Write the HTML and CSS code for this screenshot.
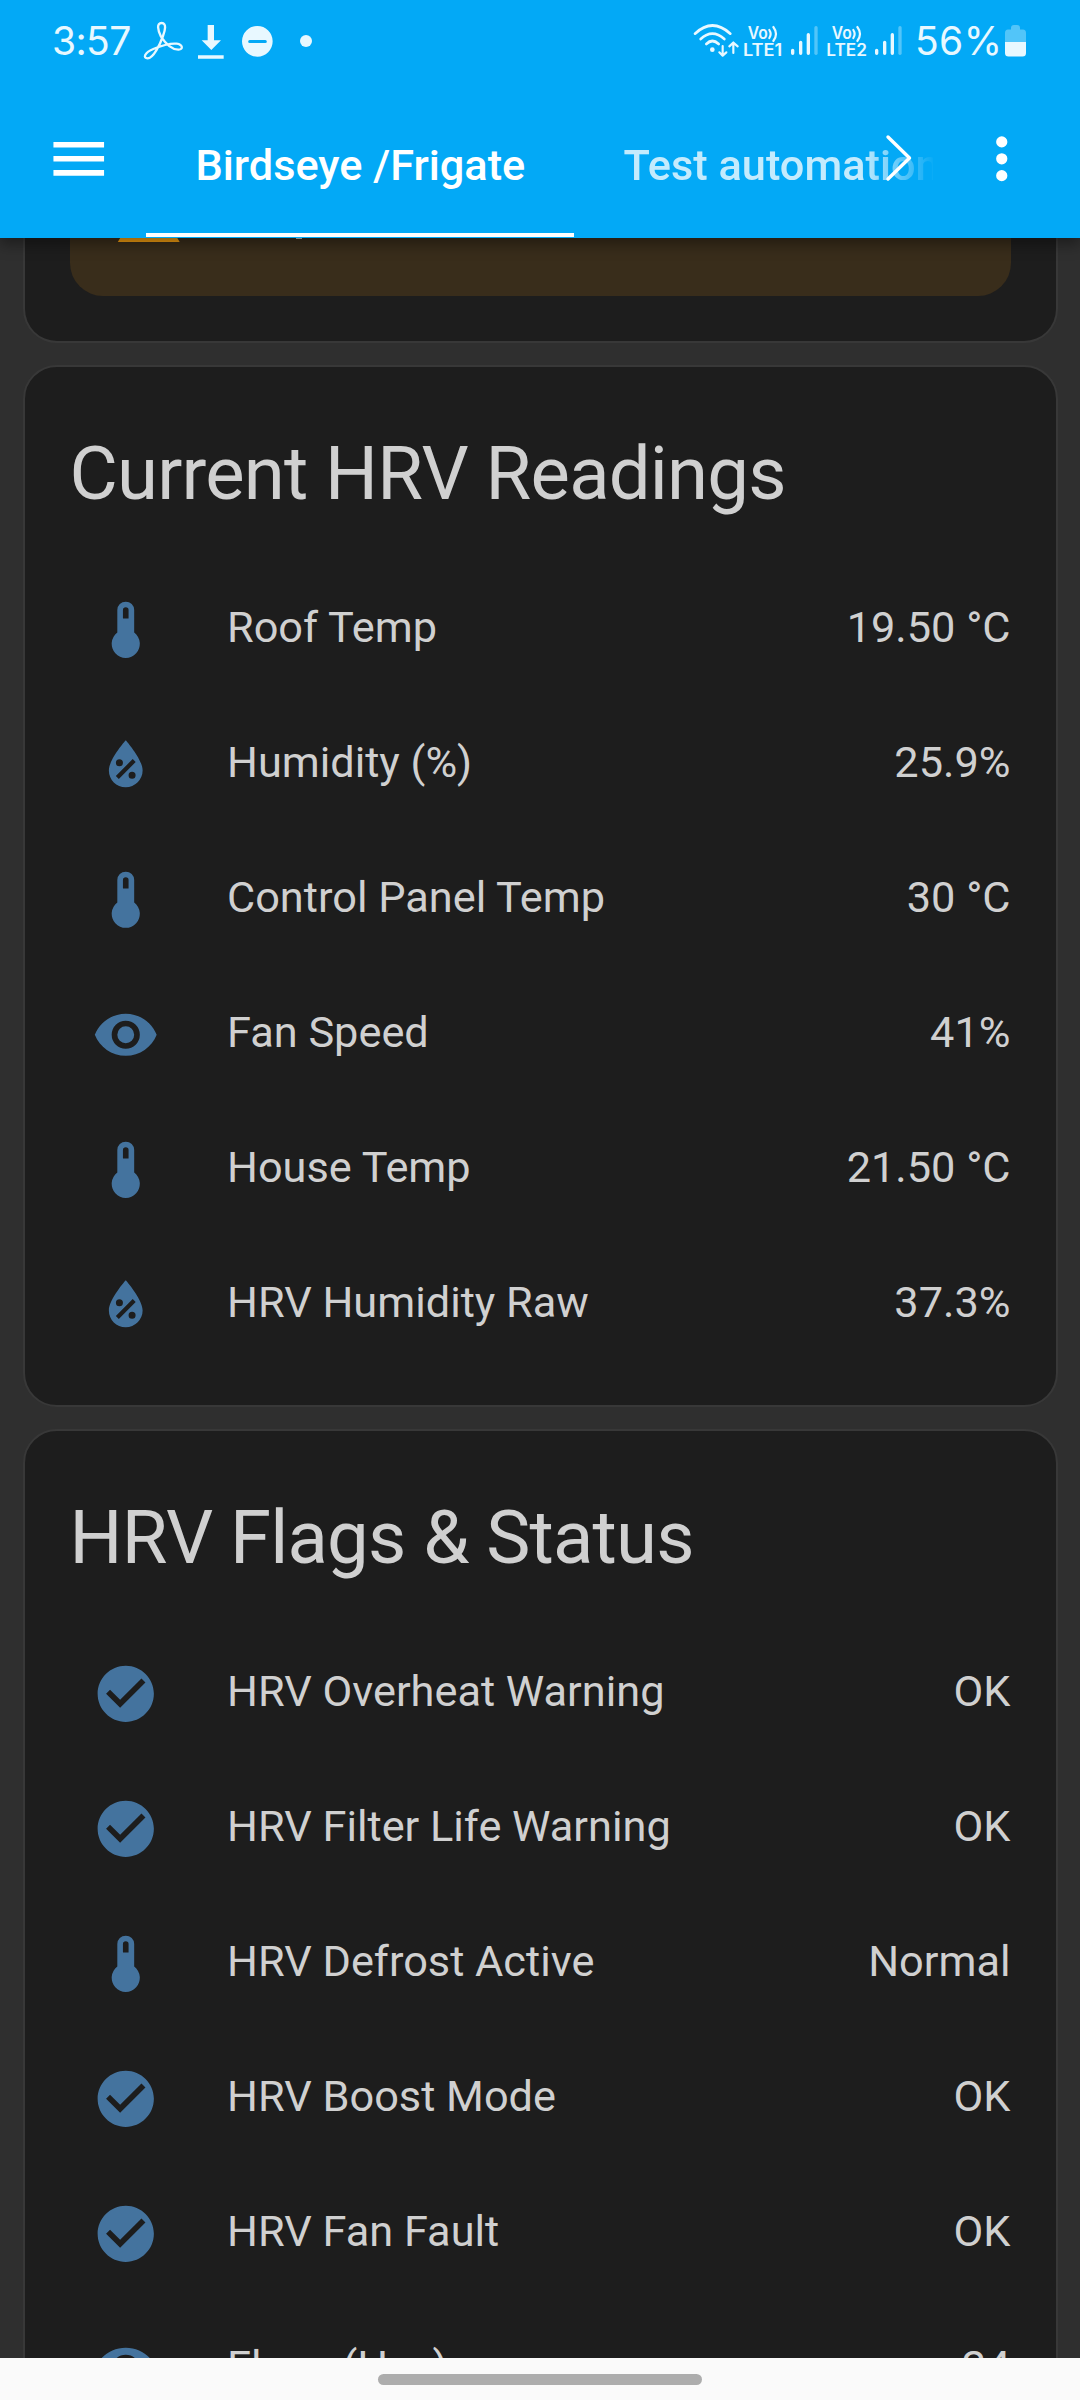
FILE: index.html
```html
<!DOCTYPE html>
<html lang="en">
<head>
<meta charset="utf-8">
<title>Birdseye /Frigate</title>
<link rel="stylesheet" href="styles.css">
</head>
<body>
<svg class="defs" aria-hidden="true">
  <symbol id="thermometer" viewBox="0 0 24 24"><path d="M15 13V5A3 3 0 0 0 9 5V13A5 5 0 1 0 15 13M12 4A1 1 0 0 1 13 5V8H11V5A1 1 0 0 1 12 4Z"/></symbol>
  <symbol id="humidity" viewBox="0 0 24 24"><path d="M12 3.25S6 10 6 14C6 17.32 8.69 20 12 20A6 6 0 0 0 18 14C18 10 12 3.25 12 3.25M14.47 9.97L15.53 11.03L9.53 17.03L8.47 15.97M9.75 10A1.25 1.25 0 0 1 11 11.25A1.25 1.25 0 0 1 9.75 12.5A1.25 1.25 0 0 1 8.5 11.25A1.25 1.25 0 0 1 9.75 10M14.25 14.5A1.25 1.25 0 0 1 15.5 15.75A1.25 1.25 0 0 1 14.25 17A1.25 1.25 0 0 1 13 15.75A1.25 1.25 0 0 1 14.25 14.5Z"/></symbol>
  <symbol id="eye" viewBox="0 0 24 24"><path d="M12 9A3 3 0 0 0 9 12A3 3 0 0 0 12 15A3 3 0 0 0 15 12A3 3 0 0 0 12 9M12 17A5 5 0 0 1 7 12A5 5 0 0 1 12 7A5 5 0 0 1 17 12A5 5 0 0 1 12 17M12 4.5C7 4.5 2.73 7.61 1 12C2.73 16.39 7 19.5 12 19.5C17 19.5 21.27 16.39 23 12C21.27 7.61 17 4.5 12 4.5Z"/></symbol>
  <symbol id="check" viewBox="0 0 24 24"><path d="M12 2C6.5 2 2 6.5 2 12S6.5 22 12 22 22 17.5 22 12 17.5 2 12 2M10 17L5 12L6.41 10.59L10 14.17L17.59 6.58L19 8L10 17Z"/></symbol>
</svg>

<header class="header">
  <div class="status">
    <span class="clock">3:57</span>
    <svg class="notifications" viewBox="0 0 200 60">
      <g transform="scale(.33333)">
        <path class="line" stroke-width="7" d="M93 80C83 60 79 39 95 39C111 39 105 62 99 78C90 104 70 145 53 145C38 145 43 128 70 117C94 107 120 99 140 101C159 104 160 118 146 119C126 120 107 101 93 80Z"/>
        <path d="M233 45h19v46h21l-29 29-29-29h18zM204 136h77v10h-77z"/>
        <path fill-rule="evenodd" d="M382 48a46 46 0 1 1 0 92a46 46 0 1 1 0-92M359 90a4 4 0 0 0 0 9h47a4 4 0 0 0 0-9z"/>
        <circle cx="528" cy="93" r="18"/>
      </g>
    </svg>
    <svg class="signals" viewBox="0 0 220 60">
      <g transform="scale(.33333)">
        <g class="line" stroke-width="8">
          <path d="M15 71Q67 22 121 71M32 87Q67 55 103 87M49 102Q67 84 86 102"/>
          <path stroke-width="6.5" d="M98 108V136M88 127L98 137L109 127M130 129V98M118 109L130 98L143 109"/>
        </g>
        <circle cx="67" cy="119" r="7"/>
        <g id="sim">
          <text class="volte" x="173" y="86" textLength="60" lengthAdjust="spacingAndGlyphs">Vo</text>
          <path class="line" stroke-width="6.5" d="M238 60Q246 72 238 84M250 51Q266 72 250 93"/>
          <path class="line" stroke-width="10" d="M308 121V130M332 97V130M355 74V130"/>
          <path class="line faint" stroke-width="10" d="M378 53V130"/>
        </g>
        <text class="volte" x="159" y="138" textLength="118" lengthAdjust="spacingAndGlyphs">LTE1</text>
        <use href="#sim" x="252"/>
        <text class="volte" x="409" y="138" textLength="122" lengthAdjust="spacingAndGlyphs">LTE2</text>
      </g>
    </svg>
    <span class="percent">56%</span>
    <svg class="battery" viewBox="0 0 21 32">
      <path opacity=".35" d="M6 3Q6 0 9 0H12Q15 0 15 3V4.500H18Q21 4.500 21 8V17H0V8Q0 4.500 3 4.500H6z"/>
      <path d="M0 17H21V28Q21 31.500 17.500 31.500H3.500Q0 31.500 0 28z"/>
    </svg>
  </div>
  <div class="toolbar">
    <svg class="menu" viewBox="0 0 24 24"><path d="M3 6H21V8H3V6M3 11H21V13H3V11M3 16H21V18H3V16Z"/></svg>
    <nav class="tabs">
      <a class="tab active">Birdseye /Frigate</a>
      <a class="tab next">Test automation</a>
      <svg class="chevron" viewBox="0 0 30 50"><path d="M4 4L25.500 25L4 46"/></svg>
    </nav>
    <svg class="more" viewBox="0 0 24 24"><path d="M12 16A2 2 0 0 1 14 18A2 2 0 0 1 12 20A2 2 0 0 1 10 18A2 2 0 0 1 12 16M12 10A2 2 0 0 1 14 12A2 2 0 0 1 12 14A2 2 0 0 1 10 12A2 2 0 0 1 12 10M12 4A2 2 0 0 1 14 6A2 2 0 0 1 12 8A2 2 0 0 1 10 6A2 2 0 0 1 12 4Z"/></svg>
  </div>
</header>

<main class="view">
  <section class="card card-alert">
    <div class="alert">
      <svg class="alert-icon" viewBox="0 0 24 24"><path d="M13 14H11V9H13M13 18H11V15H13M1 21H23L12 2L1 21Z"/></svg>
      <span class="alert-tail"></span>
    </div>
  </section>

  <section class="card">
    <h1 class="title">Current HRV Readings</h1>
    <div class="rows">
      <div class="row"><svg class="icon"><use href="#thermometer"/></svg><span class="name">Roof Temp</span><span class="value">19.50 °C</span></div>
      <div class="row"><svg class="icon"><use href="#humidity"/></svg><span class="name">Humidity (%)</span><span class="value">25.9%</span></div>
      <div class="row"><svg class="icon"><use href="#thermometer"/></svg><span class="name">Control Panel Temp</span><span class="value">30 °C</span></div>
      <div class="row"><svg class="icon"><use href="#eye"/></svg><span class="name">Fan Speed</span><span class="value">41%</span></div>
      <div class="row"><svg class="icon"><use href="#thermometer"/></svg><span class="name">House Temp</span><span class="value">21.50 °C</span></div>
      <div class="row"><svg class="icon"><use href="#humidity"/></svg><span class="name">HRV Humidity Raw</span><span class="value">37.3%</span></div>
    </div>
  </section>

  <section class="card">
    <h1 class="title">HRV Flags &amp; Status</h1>
    <div class="rows">
      <div class="row"><svg class="icon"><use href="#check"/></svg><span class="name">HRV Overheat Warning</span><span class="value">OK</span></div>
      <div class="row"><svg class="icon"><use href="#check"/></svg><span class="name">HRV Filter Life Warning</span><span class="value">OK</span></div>
      <div class="row"><svg class="icon"><use href="#thermometer"/></svg><span class="name">HRV Defrost Active</span><span class="value">Normal</span></div>
      <div class="row"><svg class="icon"><use href="#check"/></svg><span class="name">HRV Boost Mode</span><span class="value">OK</span></div>
      <div class="row"><svg class="icon"><use href="#check"/></svg><span class="name">HRV Fan Fault</span><span class="value">OK</span></div>
      <div class="row"><svg class="icon"><use href="#eye"/></svg><span class="name">Flags (Hex)</span><span class="value">24</span></div>
    </div>
  </section>
</main>

<footer class="navbar"><div class="handle"></div></footer>
</body>
</html>
```
FILE: styles.css
```css
* { box-sizing: border-box; }

body {
  margin: 0;
  width: 1080px;
  height: 2400px;
  overflow: hidden;
  display: flex;
  flex-direction: column;
  background: #2f2f2f;
  color: #d0d0d0;
  font-family: Roboto, "Liberation Sans", sans-serif;
}

.defs { display: none; }

.header {
  flex: none;
  height: 238px;
  position: relative;
  z-index: 1;
  background: #03a9f6;
  box-shadow: 0 6px 14px rgba(0, 0, 0, .4);
}

.status {
  height: 80px;
  display: flex;
  align-items: flex-start;
  padding: 10px 53px 0 52px;
  color: #e8f8ff;
  fill: #e8f8ff;
}

.clock, .percent {
  font-family: Inter, sans-serif;
  font-weight: 400;
  font-size: 39px;
  line-height: 62px;
  height: 60px;
  white-space: nowrap;
}

.clock { width: 78px; letter-spacing: -.6px; }
.percent { width: 90px; letter-spacing: .4px; }
.notifications { flex: none; width: 200px; height: 60px; }
.signals { flex: none; width: 220px; height: 60px; margin-left: 360px; margin-right: 5px; }
.battery { flex: none; width: 21px; height: 32px; margin-top: 15px; }

.line {
  fill: none;
  stroke: #e8f8ff;
  stroke-linecap: round;
  stroke-linejoin: round;
}
.faint { opacity: .35; }
.volte { font: 600 50px Inter, sans-serif; }

.toolbar {
  height: 158px;
  display: flex;
  align-items: center;
}

.menu {
  width: 67.5px;
  height: 67.5px;
  margin: 0 33.5px 0 45px;
  fill: #fff;
}

.tabs {
  width: 787px;
  height: 158px;
  display: flex;
  position: relative;
  overflow: hidden;
}

.tab {
  flex: none;
  height: 157px;
  padding: 14px 48px 0 49.5px;
  font-size: 43.3px;
  font-weight: 500;
  line-height: 144px;
  white-space: nowrap;
  color: #fff;
}
.tab.active { width: 428px; border-bottom: 4px solid #fff; }
.next {
  color: rgba(255, 255, 255, .77);
  -webkit-mask-image: linear-gradient(to right, #000 288px, transparent 362px);
  mask-image: linear-gradient(to right, #000 288px, transparent 362px);
}

.chevron {
  position: absolute;
  left: 738px;
  top: 53px;
  width: 30px;
  height: 50px;
  fill: none;
  stroke: #fff;
  stroke-width: 3.4;
  stroke-linecap: round;
  stroke-linejoin: round;
}

.more { width: 67.5px; height: 67.5px; margin-left: 34.5px; fill: #fff; }

.view {
  flex: none;
  height: 2120px;
  overflow: hidden;
  padding: 0 22px 0 23px;
  display: flex;
  flex-direction: column;
  gap: 22px;
}

.card {
  flex: none;
  height: 1042px;
  background: #1d1d1d;
  border: 2px solid #383838;
  border-radius: 34px;
}

.card-alert {
  height: 105px;
  border-top: 0;
  border-radius: 0 0 34px 34px;
  padding: 0 45px;
}

.alert {
  height: 58px;
  display: flex;
  padding-left: 45px;
  background: #392d1b;
  border-radius: 0 0 33px 33px;
}
.alert-icon { width: 67.5px; height: 67.5px; margin-top: -55px; fill: #f09c10; }
.alert-tail { width: 6px; height: 1px; margin-left: 113px; background: #c9c5be; }

.title {
  margin: 0;
  height: 207px;
  padding: 5px 44.5px 0;
  font-size: 74.25px;
  font-weight: 400;
  line-height: 203px;
  letter-spacing: -.8px;
  white-space: nowrap;
}

.rows {
  padding: 0 45.5px 0 44px;
  display: flex;
  flex-direction: column;
  gap: 22.5px;
}

.row {
  height: 112.5px;
  display: flex;
  align-items: center;
  font-size: 43.3px;
  line-height: 108px;
  white-space: nowrap;
}
.icon { width: 67.5px; height: 67.5px; margin: 0 68px 0.5px 22.5px; fill: #44739e; }
.name { flex: 1; padding-bottom: 4px; }
.value { padding-bottom: 4px; }

.navbar {
  flex: none;
  height: 42px;
  background: #fafafa;
  display: flex;
  justify-content: center;
  padding-top: 16px;
}
.handle { width: 324px; height: 11px; border-radius: 6px; background: #adadad; }
```
